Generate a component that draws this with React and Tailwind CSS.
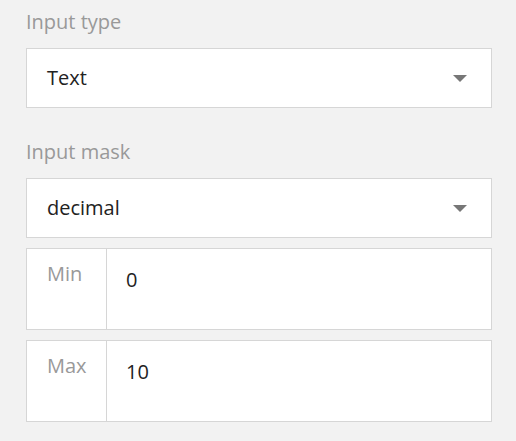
import React from 'react';

const font = { fontFamily: '"Open Sans", "Liberation Sans", sans-serif' };

const SelectBox = ({ value }) => (
  <div className="flex h-[60px] items-center justify-between border border-[#d6d6d6] bg-white pl-5 pr-6">
    <span className="text-[20px] leading-[28px] text-[#222]">{value}</span>
    {/* caret */}
    <span className="h-0 w-0 border-l-[7px] border-r-[7px] border-t-[7px] border-l-transparent border-r-transparent border-t-[#777]" />
  </div>
);

const RangeBox = ({ label, value }) => (
  <div className="flex h-[82px] border border-[#d6d6d6] bg-white">
    <div className="w-[80px] border-r border-[#d6d6d6] pl-5 pt-[11px] text-[20px] leading-[28px] text-[#999]">
      {label}
    </div>
    <div className="flex-1 pl-[19px] pt-[17px] text-[20px] leading-[28px] text-[#222]">{value}</div>
  </div>
);

export default function App() {
  return (
    <div className="h-[441px] w-[516px] bg-[#f2f2f2] pl-[26px] pr-[24px] pt-[8px]" style={font}>
      <div className="mb-3 text-[20px] leading-[28px] text-[#999]">Input type</div>
      <SelectBox value="Text" />

      <div className="mb-3 mt-[30px] text-[20px] leading-[28px] text-[#999]">Input mask</div>
      <SelectBox value="decimal" />

      <div className="mt-[10px] flex flex-col gap-[10px]">
        <RangeBox label="Min" value="0" />
        <RangeBox label="Max" value="10" />
      </div>
    </div>
  );
}
